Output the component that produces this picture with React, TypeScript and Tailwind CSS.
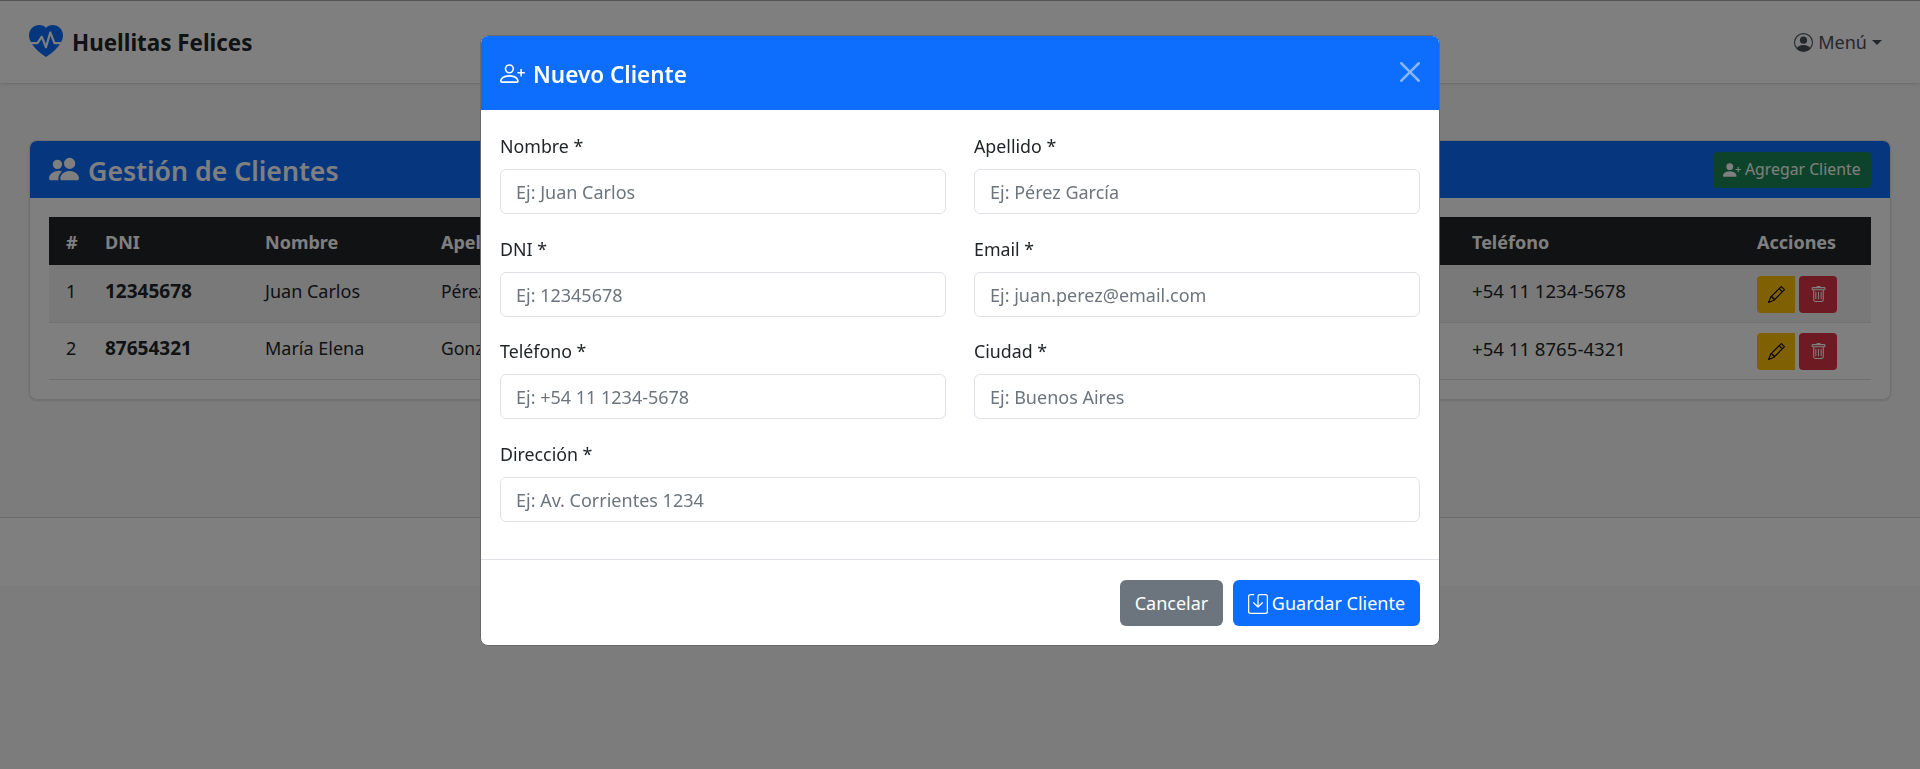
import { BsHeartPulseFill, BsPeopleFill, BsPersonPlusFill, BsPersonPlus, BsPersonCircle, BsPencil, BsTrash, BsSave } from "react-icons/bs";

type Cliente = { dni: string; nombre: string; apellido: string; email: string; telefono: string };

const clientes: Cliente[] = [
  { dni: "12345678", nombre: "Juan Carlos", apellido: "Pérez García", email: "juan.perez@email.com", telefono: "+54 11 1234-5678" },
  { dni: "87654321", nombre: "María Elena", apellido: "González López", email: "maria.gonzalez@email.com", telefono: "+54 11 8765-4321" },
];

function Field({ label, placeholder, className = "" }: { label: string; placeholder: string; className?: string }) {
  return (
    <div className={className}>
      <label className="block text-[17.8px] leading-[24px] mb-[11px] text-[#212529]">{label}</label>
      <input
        placeholder={placeholder}
        className="block w-full h-[45px] pl-[15px] pr-[16px] pt-[1px] text-[18px] border border-[#dee2e6] rounded-[6px] outline-none placeholder:text-[#6c757d]"
      />
    </div>
  );
}

export default function App() {
  return (
    <div className="min-h-[769px] bg-[#f8f9fa] font-['Noto_Sans',sans-serif] text-[#212529]">
      <nav className="h-[83px] bg-white border-t border-[#aaaaaa] shadow-sm flex items-center justify-between pl-[29px] pr-[38px]">
        <div className="flex items-center gap-[9px]">
          <BsHeartPulseFill className="text-[#0d6efd]" size={34} />
          <span className="pt-[2px] text-[22.4px] font-bold">Huellitas Felices</span>
        </div>
        <div className="flex items-center gap-[5px] pt-[1px] text-[18px] text-[#495057]">
          <BsPersonCircle size={19} />
          <span>Menú</span>
          <span className="border-x-[5px] border-t-[5px] border-x-transparent border-t-[#495057]" />
        </div>
      </nav>

      <main className="px-[29px] pt-[57px] pb-[117px]">
        <section className="bg-white rounded-[8px] border border-[#e2e3e4] shadow-sm overflow-hidden">
          <header className="h-[57px] bg-[#0d6efd] flex items-center justify-between px-[19px]">
            <h2 className="flex items-center gap-[9px] text-[26.7px] font-semibold text-white">
              <BsPeopleFill size={30} />
              <span className="pt-[3px]">Gestión de Clientes</span>
            </h2>
            <button className="w-[158px] h-[36px] pl-[10px] pt-[1px] flex items-center gap-[4px] bg-[#198754] rounded-[4px] text-[15.8px] whitespace-nowrap text-white">
              <BsPersonPlusFill size={18} />
              Agregar Cliente
            </button>
          </header>
          <div className="px-[19px] pt-[19px] pb-[19px]">
            <table className="w-full table-fixed border-collapse text-[18px]">
              <colgroup>
                <col className="w-[39px]" />
                <col className="w-[160px]" />
                <col className="w-[176px]" />
                <col className="w-[300px]" />
                <col />
                <col className="w-[285px]" />
                <col className="w-[131px]" />
              </colgroup>
              <thead>
                <tr className="h-[48px] bg-[#212529] text-white text-left font-bold">
                  <th className="pl-[17px] pt-[3px]">#</th>
                  <th className="pl-[17px] pt-[3px]">DNI</th>
                  <th className="pl-[17px] pt-[3px]">Nombre</th>
                  <th className="pl-[17px] pt-[3px]">Apellido</th>
                  <th className="pl-[17px] pt-[3px]">Email</th>
                  <th className="pl-[17px] pt-[3px]">Teléfono</th>
                  <th className="pl-[17px] pt-[3px]">Acciones</th>
                </tr>
              </thead>
              <tbody>
                {clientes.map((c, i) => (
                  <tr key={c.dni} className={`h-[57px] border-b border-[#dee2e6] ${i === 0 ? "bg-[#f2f2f2]" : ""}`}>
                    <td className="pl-[17px] pb-[4px]">{i + 1}</td>
                    <td className="pl-[17px] pb-[4px] font-bold text-[19px]">{c.dni}</td>
                    <td className="pl-[17px] pb-[4px]">{c.nombre}</td>
                    <td className="pl-[17px] pb-[4px] whitespace-nowrap text-[17.5px]">{c.apellido}</td>
                    <td className="pl-[17px] pb-[4px]">{c.email}</td>
                    <td className="pl-[17px] pb-[4px] text-[18.6px]">{c.telefono}</td>
                    <td className="pl-[17px] pt-[2px]">
                      <div className="flex gap-[4px]">
                        <button className="w-[38px] h-[37px] bg-[#ffc107] rounded-l-[4px] flex items-center justify-center text-black">
                          <BsPencil size={17} />
                        </button>
                        <button className="w-[38px] h-[37px] bg-[#dc3545] rounded-[4px] flex items-center justify-center text-white">
                          <BsTrash size={17} />
                        </button>
                      </div>
                    </td>
                  </tr>
                ))}
              </tbody>
            </table>
          </div>
        </section>
      </main>

      <footer className="h-[68px] bg-white border-t border-[#d4d4d4]" />

      <div className="fixed inset-0 bg-black/50" />

      <div className="fixed left-[480px] top-[35px] w-[960px] h-[611px] bg-white border border-[#6a6a6a] rounded-[8px] overflow-hidden flex flex-col">
        <div className="h-[74px] shrink-0 bg-[#0d6efd] text-white flex items-center justify-between pl-[19px] pr-[19px]">
          <h5 className="flex items-center gap-[8px] text-[22.5px] font-semibold">
            <BsPersonPlus size={25} />
            <span className="pt-[3px]">Nuevo Cliente</span>
          </h5>
          <svg viewBox="0 0 16 16" className="w-[20px] h-[20px] opacity-50 -translate-y-[1px]" fill="#ffffff">
            <path d="M.293.293a1 1 0 0 1 1.414 0L8 6.586 14.293.293a1 1 0 1 1 1.414 1.414L9.414 8l6.293 6.293a1 1 0 0 1-1.414 1.414L8 9.414l-6.293 6.293a1 1 0 0 1-1.414-1.414L6.586 8 .293 1.707a1 1 0 0 1 0-1.414" />
          </svg>
        </div>
        <div className="flex-1 px-[19px] pt-[24px]">
          <div className="grid grid-cols-2 gap-x-[28px] gap-y-[22.5px]">
            <Field label="Nombre *" placeholder="Ej: Juan Carlos" />
            <Field label="Apellido *" placeholder="Ej: Pérez García" />
            <Field label="DNI *" placeholder="Ej: 12345678" />
            <Field label="Email *" placeholder="Ej: juan.perez@email.com" />
            <Field label="Teléfono *" placeholder="Ej: +54 11 1234-5678" />
            <Field label="Ciudad *" placeholder="Ej: Buenos Aires" />
            <Field label="Dirección *" placeholder="Ej: Av. Corrientes 1234" className="col-span-2" />
          </div>
        </div>
        <div className="h-[86px] shrink-0 border-t border-[#dee2e6] flex items-start justify-end gap-[10px] pt-[20px] pr-[19px]">
          <button className="w-[103px] h-[46px] pt-[1px] bg-[#6c757d] text-white text-[18px] rounded-[6px]">Cancelar</button>
          <button className="w-[187px] h-[46px] pt-[1px] bg-[#0d6efd] text-white text-[18px] rounded-[6px] flex items-center justify-center gap-[4px]">
            <BsSave size={20} />
            Guardar Cliente
          </button>
        </div>
      </div>
    </div>
  );
}
